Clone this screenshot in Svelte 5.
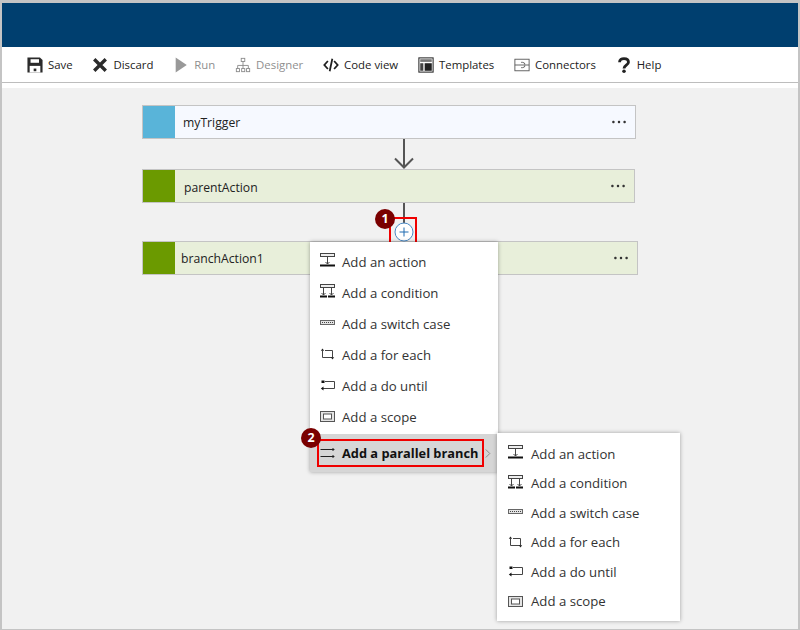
<script>
	const tools = [
		{ label: "Save", icon: "save" },
		{ label: "Discard", icon: "discard" },
		{ label: "Run", icon: "run", off: true },
		{ label: "Designer", icon: "designer", off: true },
		{ label: "Code view", icon: "code" },
		{ label: "Templates", icon: "templates" },
		{ label: "Connectors", icon: "connectors" },
		{ label: "Help", icon: "help" },
	];

	const menuItems = [
		{ label: "Add an action", icon: "action" },
		{ label: "Add a condition", icon: "condition" },
		{ label: "Add a switch case", icon: "switch" },
		{ label: "Add a for each", icon: "foreach" },
		{ label: "Add a do until", icon: "until" },
		{ label: "Add a scope", icon: "scope" },
	];
</script>

{#snippet toolIcon(name)}
	<svg class="tool-icon" viewBox="0 0 18 18" aria-hidden="true">
		{#if name === "save"}
			<path fill="#2b2b2b" d="M0.500 0.500h14l3 3v14H0.500z" />
			<rect x="4" y="2.500" width="9.500" height="4" fill="#fff" />
			<rect x="3" y="10" width="12" height="7.500" fill="#fff" />
			<rect x="7.500" y="13" width="3" height="3" fill="#2b2b2b" />
		{:else if name === "discard"}
			<path stroke="#2b2b2b" stroke-width="3.800" d="M2.500 2.500l13 13M15.500 2.500l-13 13" />
		{:else if name === "run"}
			<path fill="#999" d="M3 0.500l12.500 8.500-12.500 8.500z" />
		{:else if name === "designer"}
			<g fill="none" stroke="#8a8a8a">
				<rect x="7" y="1.500" width="4" height="3.500" />
				<rect x="1.500" y="13" width="3.500" height="3.500" />
				<rect x="7.500" y="13" width="3.500" height="3.500" />
				<rect x="13" y="13" width="3.500" height="3.500" />
				<path d="M9 5v8M3 13v-3.500h12V13" />
			</g>
		{:else if name === "code"}
			<path fill="none" stroke="#1f1f1f" stroke-width="2" d="M5.500 4.500L1.500 9l4 4.500M12.500 4.500l4 4.500-4 4.500M10.500 2L7.500 16" />
		{:else if name === "templates"}
			<rect x="1" y="1" width="16" height="16" fill="#fff" stroke="#2b2b2b" stroke-width="1.200" />
			<rect x="2.500" y="2.500" width="13" height="3" fill="#777" />
			<rect x="2.500" y="7" width="3.500" height="8.500" fill="#444" />
			<rect x="7.500" y="7" width="8" height="8.500" fill="#222" />
		{:else if name === "connectors"}
			<g fill="none" stroke="#555">
				<rect x="1" y="2.500" width="16" height="13" />
				<path d="M1 9h4.500M13 9h4M8 6h1.500a3 3 0 0 1 0 6H8M5.500 9h6.500" />
			</g>
		{:else if name === "help"}
			<path fill="none" stroke="#222" stroke-width="3.200" d="M4 6C4 3 6.300 1.800 9 1.800s5 1.300 5 4c0 3.200-5 3.500-5 7" />
			<circle cx="9" cy="16" r="2" fill="#222" />
		{/if}
	</svg>
{/snippet}

{#snippet menuIcon(name)}
	<svg class="menu-icon" viewBox="0 0 15 15" aria-hidden="true">
		{#if name === "action"}
			<g fill="none" stroke="#444">
				<rect x="0.500" y="0.500" width="14" height="3" fill="#eee" />
				<path d="M7.500 4v7M5.500 9l2 2 2-2" />
			</g>
			<rect y="11.500" width="15" height="2" fill="#111" />
		{:else if name === "condition"}
			<g fill="none" stroke="#444">
				<rect x="0.500" y="0.500" width="14" height="3" fill="#eee" />
				<path d="M3.500 4v7M1.500 9l2 2 2-2M11.500 4v7M9.500 9l2 2 2-2" />
			</g>
			<rect y="11.500" width="7" height="2" fill="#111" />
			<rect x="8" y="11.500" width="7" height="2" fill="#111" />
		{:else if name === "switch"}
			<rect x="0.500" y="5.500" width="14" height="4" fill="#e4e4e4" stroke="#666" />
			<path stroke="#444" stroke-dasharray="1 1" d="M2 7.500h11" />
		{:else if name === "foreach"}
			<path fill="none" stroke="#444" d="M2.500 4.500v7h10v-7H5" />
			<path fill="#222" d="M2.500 2.500L0.800 4.800h3.400zM12.500 13.500l-1.700-2.300h3.400z" />
		{:else if name === "until"}
			<path fill="none" stroke="#444" d="M5 4.500h9.500v7H3" />
			<rect x="1.500" y="3.500" width="3" height="2.500" fill="#111" />
			<path fill="#111" d="M0.800 11.500l2.700-2v4z" />
		{:else if name === "scope"}
			<rect x="0.500" y="3.500" width="14" height="10" fill="#e4e4e4" stroke="#555" />
			<rect x="3.500" y="6" width="8" height="5" fill="#fff" stroke="#555" />
		{:else if name === "parallel"}
			<path fill="none" stroke="#222" d="M0.500 4.500h13.500M12.500 3l1.500 1.500-1.500 1.500M0.500 11.500h13.500M12.500 10l1.500 1.500-1.500 1.500" />
		{/if}
	</svg>
{/snippet}

{#snippet moreDots()}
	<svg class="more" viewBox="0 0 14 4" aria-hidden="true">
		<rect x="0.200" y="0.800" width="2.400" height="2.400" rx="1" />
		<rect x="5.800" y="0.800" width="2.400" height="2.400" rx="1" />
		<rect x="11.400" y="0.800" width="2.400" height="2.400" rx="1" />
	</svg>
{/snippet}

<div class="frame">
	<header class="banner"></header>

	<nav class="toolbar">
		{#each tools as tool}
			<span class="tool" class:off={tool.off}>
				{@render toolIcon(tool.icon)}
				{tool.label}
			</span>
		{/each}
	</nav>

	<main class="canvas">
		<div class="card trigger">
			<span class="swatch"></span>
			<span class="title">myTrigger</span>
			{@render moreDots()}
		</div>

		<svg class="arrow" viewBox="0 0 24 30" aria-hidden="true">
			<path fill="none" stroke="#555" stroke-width="2" d="M12 0v28.500M3 19.500l9 9 9-9" />
		</svg>

		<div class="card parent">
			<span class="swatch green"></span>
			<span class="title">parentAction</span>
			{@render moreDots()}
		</div>

		<div class="card branch">
			<span class="swatch green"></span>
			<span class="title">branchAction1</span>
			{@render moreDots()}
		</div>

		<span class="stem"></span>
		<span class="add">
			<svg viewBox="0 0 20 20" aria-hidden="true">
				<circle cx="10" cy="10" r="9" fill="#fff" stroke="#4a8ac6" />
				<path stroke="#1f6bb0" d="M10 5.500v9M5.500 10h9" />
			</svg>
		</span>
		<span class="mark add-mark"></span>
		<span class="badge badge-one">1</span>

		<div class="menu">
			{#each menuItems as item}
				<div class="item">
					{@render menuIcon(item.icon)}
					{item.label}
				</div>
			{/each}
			<div class="item active">
				{@render menuIcon("parallel")}
				Add a parallel branch
				<svg class="chevron" viewBox="0 0 7 11" aria-hidden="true">
					<path fill="none" stroke="#777" d="M1 0.500l5 5-5 5" />
				</svg>
			</div>
		</div>
		<span class="mark branch-mark"></span>
		<span class="badge badge-two">2</span>

		<div class="submenu">
			{#each menuItems as item}
				<div class="item">
					{@render menuIcon(item.icon)}
					{item.label}
				</div>
			{/each}
		</div>
	</main>
</div>

<style>
	:global(body) {
		background: #c4c4c4;
	}

	.frame {
		box-sizing: border-box;
		display: flex;
		flex-direction: column;
		width: 800px;
		height: 630px;
		padding: 3px 2px 1px;
		background: #c4c4c4;
		font-family: "Open Sans", "Noto Sans", sans-serif;
		color: #222;
	}

	.banner {
		flex: none;
		height: 44px;
		background: #003f6f;
	}

	.toolbar {
		flex: none;
		box-sizing: border-box;
		display: flex;
		align-items: center;
		gap: 19.800px;
		height: 36px;
		padding: 0 0 0 25px;
		background: #fff;
		border-bottom: 1px solid #bdbdbd;
		font-size: 11.400px;
	}

	.tool {
		display: flex;
		align-items: center;
		gap: 5px;
		white-space: nowrap;
	}

	.tool.off {
		color: #8f8f8f;
	}

	.tool-icon {
		width: 16px;
		height: 16px;
	}

	.canvas {
		position: relative;
		flex: 1;
		display: flex;
		flex-direction: column;
		align-items: flex-start;
		padding: 17px 0 0 140px;
		background: #f1f1f1;
		border-top: 5px solid #fff;
	}

	.card {
		box-sizing: border-box;
		display: flex;
		align-items: center;
		height: 34px;
		border: 1px solid #c4c4c4;
		font-size: 12.200px;
	}

	.trigger {
		width: 494px;
		background: #f6f9ff;
	}

	.parent {
		width: 493px;
		background: #e8efda;
	}

	.branch {
		width: 496px;
		margin-top: 38px;
		background: #e8efda;
	}

	.swatch {
		flex: none;
		align-self: stretch;
		width: 32px;
		background: #59b4d9;
	}

	.swatch.green {
		background: #6b9a00;
	}

	.title {
		flex: 1;
		padding-left: 8px;
	}

	.parent .title {
		padding-top: 2px;
		padding-left: 9px;
	}

	.branch .title {
		padding-left: 6px;
	}

	.more {
		flex: none;
		width: 14px;
		height: 4px;
		margin-right: 9px;
		fill: #333;
	}

	.arrow {
		display: block;
		width: 24px;
		height: 30px;
		margin-left: 250px;
	}

	.stem {
		position: absolute;
		left: 401px;
		top: 115px;
		width: 2px;
		height: 22px;
		background: #555;
	}

	.add {
		position: absolute;
		left: 392px;
		top: 134px;
		width: 20px;
		height: 20px;
	}

	.add svg {
		display: block;
	}

	.mark {
		position: absolute;
		box-sizing: border-box;
		border: 2px solid #f00000;
	}

	.add-mark {
		left: 387px;
		top: 129px;
		width: 28px;
		height: 27px;
	}

	.branch-mark {
		left: 315px;
		top: 351px;
		width: 167px;
		height: 28px;
	}

	.badge {
		position: absolute;
		width: 20px;
		height: 20px;
		border-radius: 50%;
		background: #7a0000;
		color: #fff;
		font-size: 12.500px;
		font-weight: 700;
		line-height: 20px;
		text-align: center;
	}

	.badge-one {
		left: 373px;
		top: 121px;
	}

	.badge-two {
		left: 299px;
		top: 340px;
	}

	.menu,
	.submenu {
		position: absolute;
		background: #fff;
		box-shadow: 0 0 4px rgba(0, 0, 0, 0.35);
		font-size: 13.200px;
	}

	.menu {
		left: 308px;
		top: 154px;
		width: 188px;
		padding-top: 4px;
	}

	.submenu {
		left: 495px;
		top: 345px;
		width: 183px;
		height: 188px;
		padding-top: 6px;
		box-sizing: border-box;
	}

	.item {
		display: flex;
		align-items: center;
		gap: 7px;
		height: 31px;
		padding-left: 10px;
		color: #333;
		white-space: nowrap;
	}

	.submenu .item {
		height: 29.500px;
		gap: 8px;
		padding-left: 11px;
	}

	.item.active {
		height: 38px;
		margin-top: 2px;
		padding-right: 7px;
		background: #d6d6d6;
		color: #111;
		font-size: 12.800px;
		font-weight: 700;
	}

	.menu-icon {
		flex: none;
		width: 15px;
		height: 15px;
		margin-top: -2px;
	}

	.chevron {
		width: 7px;
		height: 11px;
		margin-left: auto;
	}
</style>
